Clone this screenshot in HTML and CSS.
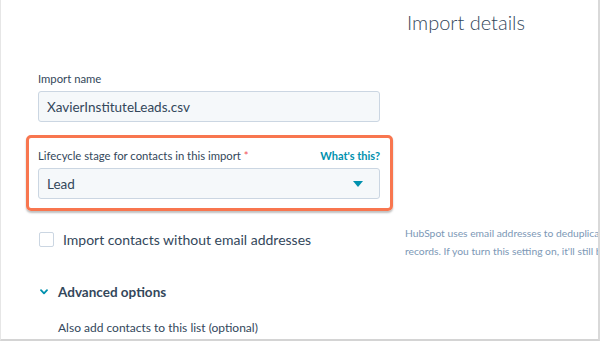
FILE: index.html
```html
<!DOCTYPE html>
<html lang="en">
<head>
  <meta charset="UTF-8">
  <meta name="viewport" content="width=device-width, initial-scale=1.0">
  <title>Import details</title>
  <link rel="stylesheet" href="styles.css">
</head>
<body>
  <div class="frame">
    <!-- Left: form fields -->
    <div class="form-col">
      <label class="field-label">Import name</label>
      <div class="text-input">XavierInstituteLeads.csv</div>

      <div class="highlight">
        <div class="label-row">
          <span class="field-label">Lifecycle stage for contacts in this import <span class="req">*</span></span>
          <a class="help-link" href="#">What's this?</a>
        </div>
        <div class="select-input">
          <span>Lead</span>
          <span class="caret"></span>
        </div>
      </div>

      <div class="check-row">
        <span class="checkbox"></span>
        <span class="check-label">Import contacts without email addresses</span>
      </div>

      <div class="advanced">
        <svg class="chevron" width="8" height="6" viewBox="0 0 8 6">
          <path d="M1 1.2 L4 4.4 L7 1.2" fill="none" stroke="#0091ae" stroke-width="1.8" stroke-linecap="round" stroke-linejoin="round"/>
        </svg>
        <span>Advanced options</span>
      </div>
      <div class="sub-label">Also add contacts to this list (optional)</div>
    </div>

    <!-- Right: details / help (runs past the frame edge) -->
    <div class="side-col">
      <h1 class="title">Import details</h1>
      <p class="help-text">HubSpot uses email addresses to deduplicate<br>records. If you turn this setting on, it'll still be used.</p>
    </div>
  </div>
</body>
</html>
```

FILE: styles.css
```css
body {
  margin: 0;
  font-family: 'Lato', 'Open Sans', sans-serif;
  color: #33475b;
  background: #fff;
}

.frame {
  display: flex;
  height: 341px;
  box-sizing: border-box;
  border-left: 1px solid #e6e6e6;
  border-right: 2px solid #d9d9d9;
  border-bottom: 2px solid #d4d4d4;
  overflow: hidden;
}

/* Left column */
.form-col {
  width: 342px;
  flex-shrink: 0;
  padding: 72px 0 0 37px;
}

.field-label {
  display: block;
  font-size: 11.3px;
  line-height: 14px;
  color: #33475b;
}

.text-input,
.select-input {
  box-sizing: border-box;
  height: 31px;
  margin-top: 5px;
  padding: 0 8px;
  display: flex;
  align-items: center;
  justify-content: space-between;
  background: #f5f8fa;
  border: 1px solid #cbd6e2;
  border-radius: 3px;
  font-size: 13.5px;
  color: #33475b;
}

/* Orange callout around the lifecycle field */
.highlight {
  margin: 13px -13px 0 -12px;
  padding: 11px 10px 9px 9px;
  border: 3px solid #f8764f;
  border-radius: 5px;
  box-shadow: 0 2px 2px rgba(0, 0, 0, 0.25);
}

.label-row {
  display: flex;
  justify-content: space-between;
  align-items: center;
}

.label-row .field-label {
  display: inline;
}

.req {
  color: #f2545b;
}

.help-link {
  font-size: 11px;
  line-height: 14px;
  font-weight: 700;
  color: #0091ae;
  text-decoration: none;
}

.caret {
  width: 0;
  height: 0;
  margin-right: 8px;
  border-left: 5px solid transparent;
  border-right: 5px solid transparent;
  border-top: 6px solid #0091ae;
}

.check-row {
  display: flex;
  align-items: center;
  margin-top: 20px;
  padding-left: 1px;
}

.checkbox {
  width: 13px;
  height: 13px;
  border: 1px solid #cbd6e2;
  border-radius: 2px;
  background: #fff;
}

.check-label {
  margin-left: 9px;
  font-size: 14px;
}

.advanced {
  display: flex;
  align-items: center;
  margin-top: 36px;
  padding-left: 2px;
  font-size: 13.5px;
  font-weight: 700;
}

.chevron {
  margin-right: 10px;
}

.sub-label {
  margin: 20px 0 0 20px;
  font-size: 12px;
}

/* Right column */
.side-col {
  flex: 1;
  min-width: 0;
  padding-left: 27px;
}

.title {
  margin: 10px 0 0;
  font-size: 20px;
  font-weight: 300;
  color: #33475b;
}

.help-text {
  margin: 190px 0 0 -2px;
  font-size: 10.3px;
  line-height: 18px;
  color: #7c98b6;
  white-space: nowrap;
}
```
